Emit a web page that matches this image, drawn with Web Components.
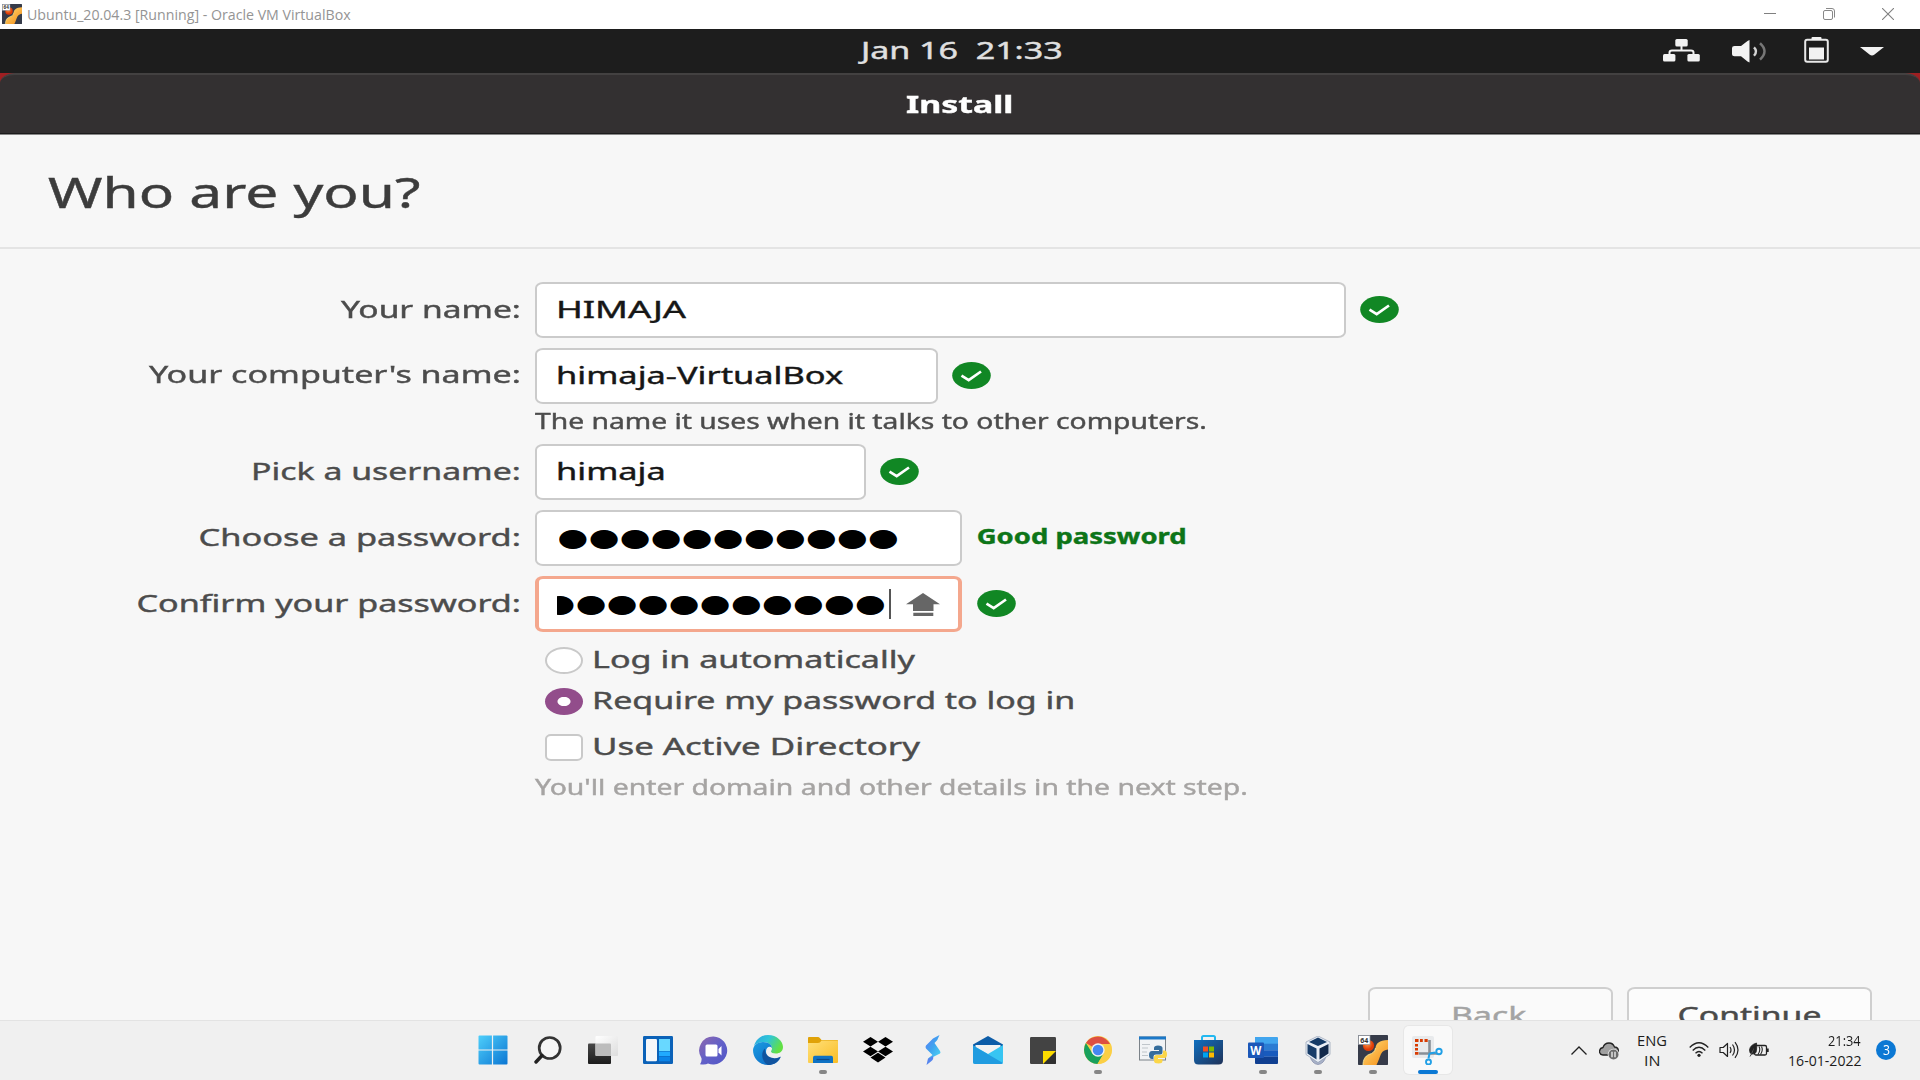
<!DOCTYPE html>
<html lang="en">
<head>
<meta charset="utf-8">
<title>Ubuntu_20.04.3 [Running] - Oracle VM VirtualBox</title>
<style>
html,body{margin:0;padding:0;width:1920px;height:1080px;overflow:hidden;background:#f7f7f7}
</style>
</head>
<body>
<vm-desktop></vm-desktop>
<script>
const define = (name, html) => customElements.define(name, class extends HTMLElement {
  connectedCallback() {
    if (this.shadowRoot) return;
    const root = this.attachShadow({ mode: 'open' });
    root.innerHTML = typeof html === 'function' ? html(this) : html;
  }
});

/* Text stretched horizontally so that its ink is exactly w pixels wide */
const ctx = document.createElement('canvas').getContext('2d');
define('fit-text', el => {
  const a = (n, d) => el.getAttribute(n) || d;
  const size = a('size', '23.5'), weight = a('weight', '400'), font = a('font', 'Noto Sans'), w = +a('w', 100), lh = a('lh', '54');
  ctx.font = `${weight} ${size}px "${font}"`;
  const m = ctx.measureText(el.textContent);
  const k = w / (m.actualBoundingBoxRight + m.actualBoundingBoxLeft);
  const off = m.actualBoundingBoxLeft * k;
  const stroke = font === 'Noto Sans' ? '-webkit-text-stroke:.4px currentColor;' : '';
  return `<style>:host{display:block;flex:none;width:${w}px;height:${lh}px;line-height:${lh}px;white-space:pre}
  span{display:inline-block;${stroke}font:${weight} ${size}px/${lh}px "${font}","Open Sans",sans-serif;transform-origin:0 50%;transform:translateX(${off}px) scaleX(${k})}</style><span><slot></slot></span>`;
});

const vm64 = `<defs><linearGradient id="o" x1="0" y1="0" x2="1" y2="1"><stop offset="0" stop-color="#ffe07a"/><stop offset="1" stop-color="#f58a12"/></linearGradient><radialGradient id="r" cx=".4" cy=".35"><stop offset="0" stop-color="#ff9a4a"/><stop offset="1" stop-color="#e03c06"/></radialGradient></defs>
<rect width="30" height="30" rx=".8" fill="#363b49"/><circle cx="10.5" cy="10.5" r="5.6" fill="url(#r)"/><path d="M30 5v9.500C27 15 24.500 16 23 19c-1.500 3.500-3 8-4.500 11H5c0-5 2-9 6-10.500 4-1.300 6-3 6.500-6.500C18 8.500 21 5.500 30 5z" fill="url(#o)"/>
<path d="M5 30c0-5 2-9 6-10.500 4-1.300 6-3 6.500-6.500" fill="none" stroke="#fff0a0" stroke-width=".8"/><rect x=".5" y=".5" width="11.500" height="9" fill="#fff" stroke="#8a8f98" stroke-width=".7"/><text x="6.200" y="7.600" text-anchor="middle" font-family="Noto Sans" font-weight="700" font-size="7" fill="#333">64</text>`;

/* name: [width, height, viewBox, markup] */
const ICONS = {
  vm: [20, 20, '0 0 30 30', vm64],
  vm64: [30, 30, '0 0 30 30', vm64],
  min: [12, 12, '0 0 12 12', '<path d="M0 5.500h12" stroke="#808080"/>'],
  restore: [12, 12, '0 0 12 12', '<g fill="none" stroke="#888"><rect x=".5" y="2.500" width="9" height="9" rx="1.500"/><path d="M3 .5h6q2.500 0 2.500 2.500v6.500"/></g>'],
  close: [12, 12, '0 0 12 12', '<path d="M0 0l12 12M12 0L0 12" stroke="#808080" stroke-width="1.100"/>'],
  net: [37, 23, '0 0 37 23', '<g fill="#f2f2f2"><rect x="12.300" y="0" width="12.400" height="7.600" rx="1.500"/><rect x="0" y="15" width="12.400" height="7.600" rx="1.500"/><rect x="24.400" y="15" width="12.400" height="7.600" rx="1.500"/></g><path d="M18.500 7v5M6.500 15.500v-2q0-2 2.500-2h19q2.500 0 2.500 2v2" fill="none" stroke="#f2f2f2" stroke-width="2"/>'],
  vol: [36, 23, '0 0 36 23', '<path d="M0 8q0-2 2.500-2h6.500L15.500 1 17.500 0v22.500l-2-1L9 16.300H2.500Q0 16.300 0 14.300z" fill="#f2f2f2"/><path d="M22 7.300q4 4 0 8.400" fill="none" stroke="#d5d5d5" stroke-width="2.400"/><path d="M28 3.200q9 8 0 16.500" fill="none" stroke="#777" stroke-width="2.500"/>'],
  bat: [25, 26, '0 0 25 26', '<rect x="1.200" y="2.800" width="22.600" height="22" rx="2" fill="none" stroke="#e8e8e8" stroke-width="2"/><rect x="7.500" y="0" width="10" height="3" rx="1" fill="#f2f2f2"/><rect x="5" y="10.500" width="15" height="12" fill="#f2f2f2"/>'],
  down: [24, 9, '0 0 24 9', '<path d="M0 0h24l-9.500 7.500q-2.500 2-5 0z" fill="#f2f2f2"/>'],
  ok: [39, 27, '0 0 39 27', '<ellipse cx="19.500" cy="13.500" rx="19.300" ry="13.400" fill="#118724"/><path d="M9.500 13.600l7.200 4.500L29 9.500" fill="none" stroke="#fff" stroke-width="2.700"/>'],
  caps: [34, 23, '0 0 34 23', '<path d="M17 0l17 11.200h-6.500V18h-20.500v-6.800H0zM7.300 19.800h20v3.200h-20z" fill="#666"/>'],
  start: [30, 30, '0 0 30 30', '<defs><linearGradient id="g" x1="0" y1="0" x2="1" y2="1" gradientUnits="objectBoundingBox"><stop offset="0" stop-color="#4fd0fb"/><stop offset="1" stop-color="#0a74d2"/></linearGradient><mask id="m"><rect x=".5" y=".5" width="29" height="29" rx="1" fill="#fff"/><path d="M14.500 0v30M0 15h30" stroke="#000" stroke-width="1.200"/></mask></defs><rect width="30" height="30" fill="url(#g)" mask="url(#m)"/>'],
  search: [28, 29, '0 0 28 29', '<circle cx="15.700" cy="12" r="10.500" fill="#f6f6f6" stroke="#333" stroke-width="2.700"/><path d="M8 19.500L2 26" stroke="#222" stroke-width="3.400" stroke-linecap="round"/>'],
  task: [30, 28, '0 0 30 28', '<defs><linearGradient id="k" x1="0" y1="0" x2="0" y2="1"><stop offset="0" stop-color="#484848"/><stop offset="1" stop-color="#1c1c1c"/></linearGradient><linearGradient id="w" x1="0" y1="0" x2="1" y2="1"><stop offset="0" stop-color="#fff"/><stop offset="1" stop-color="#ddd"/></linearGradient></defs><rect x="0" y="7.500" width="23" height="20.500" rx="1" fill="url(#k)"/><rect x="7.500" y="0" width="22.500" height="20" rx="1" fill="url(#w)"/><path d="M7.500 7.500H22q1 0 1 1V20H8.500q-1 0-1-1z" fill="#bcbcbc"/>'],
  widgets: [30, 28, '0 0 30 28', '<rect width="30" height="28" rx="1.200" fill="#0b62b8"/><rect x="3" y="3" width="11" height="22.300" rx="1.200" fill="#f5f7f9"/><path d="M16 3h11v12H16z" fill="#68d8ff"/><path d="M16 15.500h11V20H16z" fill="#20aaff"/><path d="M16 20.500h11v4.800H16z" fill="#0a84e8"/>'],
  chat: [29, 29, '0 0 29 29', '<defs><linearGradient id="c" x1="0" y1="0" x2="1" y2="1"><stop offset="0" stop-color="#9068ad"/><stop offset=".5" stop-color="#6260c8"/><stop offset="1" stop-color="#5156c6"/></linearGradient></defs><path d="M14.500.5a14 14 0 1 1-5.500 27q-2.500 1.500-8 .7 2-2.500 1.500-6A14 14 0 0 1 14.500.5z" fill="url(#c)"/><rect x="6.500" y="8.500" width="12" height="12" rx="1.500" fill="#fff"/><path d="M19.500 13l3-3v9.500l-3-3z" fill="#fff"/>'],
  edge: [30, 30, '0 0 30 30', '<defs><linearGradient id="a" x1="0" y1="0" x2="1" y2=".4"><stop offset="0" stop-color="#2aa4e0"/><stop offset=".5" stop-color="#2fc5d8"/><stop offset="1" stop-color="#62e044"/></linearGradient><linearGradient id="b" x1="0" y1="0" x2="1" y2="1"><stop offset="0" stop-color="#1b9de2"/><stop offset="1" stop-color="#0b62c0"/></linearGradient></defs><path d="M1 11C3 4 8 0 15 0c9 0 15 6.500 15 12 0 4.500-3.500 6.500-7 6.500-3 0-5-1-5-2 0-.7 1-1.200 1-3.500C19 10 15 7 10.500 7 6 7 2.500 9 1 11z" fill="url(#a)"/><path d="M0 15C.500 10 4.500 7 10 7s9 3 9 6c-2-2.500-6-1-6 3.500C13 24 21 27 27 23c-2.500 5-7 7-12 7C6.500 30 0 23.500 0 15z" fill="url(#b)"/><path d="M12 13.500c-4.500 4-3.500 13 3 16.500 5 0 9.500-2 12.500-7.500.6-.8-.2-1-.8-.6-5.500 2.800-12 .6-14-3.900-.7-1.800-.7-3.200-.7-4.500z" fill="#10549f"/>'],
  folder: [30, 28, '0 0 30 28', '<defs><linearGradient id="f" x1="0" y1="0" x2="1" y2="1"><stop offset="0" stop-color="#ffe07a"/><stop offset="1" stop-color="#f9bd25"/></linearGradient></defs><path d="M0 2Q0 1 1 1h9q1 0 2 1.300L13.500 4H29q1 0 1 1v3H0z" fill="#e0a208"/><path d="M0 7h10q2 0 3.500-2.500H29q1 0 1 1V26q0 1-1 1H1q-1 0-1-1z" fill="url(#f)"/><path d="M5 27v-5.500q0-1.700 1.700-1.700h16.600q1.700 0 1.700 1.700V27z" fill="#0f72c4"/><path d="M8.500 23.500h13" stroke="#0b4a8a" stroke-width="1.200"/>'],
  dropbox: [30, 26, '0 0 30 26', '<path d="M7.500 0L15 4.700 7.500 9.500 0 4.700zM22.500 0L30 4.700l-7.500 4.800L15 4.700zM7.500 9.700L15 14.500l-7.500 4.700L0 14.500zM22.500 9.700L30 14.500l-7.500 4.700L15 14.500zM15 15.800l7.500 4.700L15 25.500l-7.500-5z" fill="#000"/>'],
  swift: [16, 30, '0 0 16 30', '<defs><linearGradient id="s" x1="0" y1="0" x2="1" y2="1"><stop offset="0" stop-color="#5b7cf5"/><stop offset=".5" stop-color="#3fa4ef"/><stop offset="1" stop-color="#4cd8f4"/></linearGradient></defs><path d="M14.500 0L8 3.500 1 10.500q-1 1.500 0 3L7.500 20 3 23.500q4 .5 5-1.500l7-3.500q1-1 0-2.500L9.500 8q3.500-3 5-8z" fill="url(#s)"/><path d="M1.500 30L3 23.500q3-1 5-2.500 1 3-1.500 5z" fill="#5585ee"/>'],
  mail: [30, 28, '0 0 30 28', '<path d="M15 0l15 8.500V12H0V8.500z" fill="#0d5da8"/><path d="M2.500 9h25v9h-25z" fill="#f3f3f3"/><path d="M0 9.500L15 18 30 9v17q0 2-2 2H2q-2 0-2-2z" fill="#37c5f2"/><path d="M0 9.500L30 27q-1 1-2 1H2q-2 0-2-2z" fill="#209ce0"/>'],
  sticky: [26, 27, '0 0 26 27', '<rect width="26" height="27" rx="1.200" fill="#434343"/><path d="M13 27l13-13v12q0 1-1 1z" fill="#303030"/><path d="M13 14h13L13 27z" fill="#fddc00"/>'],
  chrome: [28, 28, '0 0 28 28', '<circle cx="14" cy="14" r="14" fill="#fbcf45"/><path d="M14 14L1.900 7A14 14 0 0 1 26.100 8H14z" fill="#dd4f43"/><path d="M1.900 7a14 14 0 0 0 11.600 21L20 17 14 14 8.500 17.500z" fill="#18a05d"/><path d="M26.300 8a14 14 0 0 1-12.800 20L20 17l0-9z" fill="#fbcf45"/><circle cx="14" cy="14" r="6.700" fill="#f1f1f1"/><circle cx="14" cy="14" r="5.300" fill="#4587f3"/>'],
  python: [28, 28, '0 0 28 28', '<rect x=".5" y="1" width="26" height="23" fill="#f1f3f5" stroke="#7b8288"/><path d="M0 .5h27v3H0z" fill="#1b78c8"/><path d="M3 8.500h8M3 12h6M3 16h5M3 19.500h6" stroke="#bfc5ca" stroke-width="1"/><path d="M19 9.500q-4 0-4 2.500v2h5v1h-7q-3 0-3 4t3 4h1.500v-2.500q0-2 2.500-2h4q2.500 0 2.500-2.500v-4q0-2.500-4.500-2.500z" fill="#356d9c"/><path d="M19.500 27.500q4 0 4-2.500v-2h-4.500v-1h6.500q2.500 0 2.500-3.700t-2.500-3.800h-1.500v2.500q0 2-2.500 2h-4q-2.500 0-2.500 2.500v3.500q0 2.500 4.500 2.500z" fill="#fbd648"/>'],
  store: [29, 30, '0 0 29 30', '<defs><linearGradient id="t" x1="0" y1="0" x2="1" y2="1"><stop offset="0" stop-color="#0f6fc0"/><stop offset="1" stop-color="#1f3258"/></linearGradient></defs><path d="M8 6V2.500q0-1.500 1.500-1.500h10Q21 1 21 2.500V6" fill="none" stroke="#22b8f0" stroke-width="2"/><path d="M0 5h29v20q0 4.500-4.500 4.500h-20Q0 29.500 0 25z" fill="url(#t)"/><path d="M9 11.500h5v5H9z" fill="#f25022"/><path d="M15 11.500h5v5h-5z" fill="#7fba00"/><path d="M9 17.500h5v5H9z" fill="#00a4ef"/><path d="M15 17.500h5v5h-5z" fill="#ffb900"/>'],
  word: [30, 27, '0 0 30 27', '<path d="M7 0h22q1 0 1 1v6H7z" fill="#41a5ee"/><path d="M7 6.700h23v6.800H7z" fill="#2b7cd3"/><path d="M7 13.300h23v6.500H7z" fill="#185abd"/><path d="M7 19.700h23V26q0 1-1 1H8q-1 0-1-1z" fill="#103f91"/><rect y="5.500" width="16" height="15.500" rx="1" fill="#1b57b8"/><text x="7.800" y="17.700" text-anchor="middle" font-family="Open Sans" font-weight="700" font-size="11.500" fill="#fff">W</text>'],
  vbox: [26, 29, '0 0 26 29', '<path d="M5 20q2 8 8 8.500 6-.5 8-8.500l-8 5z" fill="#a9b2c8" stroke="#7f8aa6" stroke-width=".7"/><path d="M13 0l12 6v12.500l-12 8-12-8V6z" fill="#e9eef5" stroke="#8290a8" stroke-width=".6"/><path d="M13 1.500L22 6l-9 4-9-4z" fill="#143a66"/><path d="M2.500 8l9 4.500v11L2.500 17.500z" fill="#183d69"/><path d="M23.500 8l-9 4.500v11l9-6z" fill="#11284a"/>'],
  snip: [32, 30, '0 0 32 30', '<rect x="0" y="1" width="22" height="22" rx="2" fill="#e8eaec"/><path d="M17.500 5v14M7 18.500h18" stroke="#888f96" stroke-width="2.600"/><g fill="#d83b01"><path d="M3 4h3.500v3H3zM8 4h2.800v3H8zM12.500 4h3.200v3h-3.200zM3 9h3v2.500H3zM3 13h3v2.500H3zM3 17h3.500v2.800H3z"/></g><path d="M17.500 18.500l6-1M17.500 18.500l-1 5" stroke="#22a0e6" stroke-width="2"/><circle cx="27" cy="16.500" r="2.700" fill="none" stroke="#22a0e6" stroke-width="1.900"/><circle cx="16.500" cy="27" r="2.500" fill="none" stroke="#22a0e6" stroke-width="1.900"/>'],
  chev: [16, 9, '0 0 16 9', '<path d="M.5 8.500L8 1l7.500 7.500" fill="none" stroke="#222" stroke-width="1.300"/>'],
  cloud: [20, 18, '0 0 20 18', '<path d="M4 13q-3.500-.5-3.500-3.700Q.8 6 4 5.500 5.500 1 10 1q4 0 5.500 4 4 .3 4 4.500T16 13z" fill="#a0a0a0" stroke="#222" stroke-width="1.300"/><circle cx="14.500" cy="12.500" r="5.800" fill="#f0f0f0"/><circle cx="14.500" cy="12.500" r="5" fill="#6b6b6b"/><path d="M13 9.800v5.400M16 9.800v5.400" stroke="#fff" stroke-width="1.200"/>'],
  wifi: [20, 15, '0 0 20 15', '<g fill="none" stroke="#222" stroke-width="1.300"><path d="M.7 5.500q9.300-9.500 18.600 0M3.700 8.500q6.300-6.500 12.600 0M6.500 11.300q3.500-3.500 7 0"/></g><circle cx="10" cy="13.300" r="1.600" fill="#222"/>'],
  sound: [20, 18, '0 0 20 18', '<g fill="none" stroke="#222" stroke-width="1.200"><path d="M1 6.500h3.200L8.500 2.500v13L4.200 11.500H1z" stroke-linejoin="round"/><path d="M11 6q2 3 0 6M13.500 3.500q4 5.500 0 11M16 1.200q6 7.800 0 15.600"/></g>'],
  power: [20, 16, '0 0 20 16', '<rect x="5.500" y="3.500" width="12" height="9.500" rx="1.500" fill="#f0f0f0" stroke="#222" stroke-width="1.300"/><path d="M18.800 6.500v3.500" stroke="#222" stroke-width="1.800"/><path d="M7.500 1Q1 3 .5 8q0 3 2 4l-1.500 2.500M2.500 12q4.500.5 5-3.500T7.500 1" fill="#222" stroke="#222" stroke-width=".8"/><path d="M10 4.500q2 3.500-1 8M12.500 4.500q2 3.500-1 8" fill="none" stroke="#222" stroke-width="1.100"/>']
};
define('ui-icon', el => {
  const [w, h, vb, body] = ICONS[el.getAttribute('name')];
  return `<style>:host{display:block;flex:none;width:${w}px;height:${h}px}svg{display:block}</style><svg width="${w}" height="${h}" viewBox="${vb}">${body}</svg>`;
});

define('window-title', `<style>:host{display:flex;height:29px;background:#fff;align-items:flex-start;color:#949494;box-sizing:border-box;padding:0 26px 0 2px}
.i{padding-top:4px;margin-right:6px}.c{display:flex;gap:47px;margin-left:auto;padding-top:8px}</style>
<ui-icon class="i" name="vm"></ui-icon><fit-text w="323" size="14.5" lh="29" font="Open Sans">Ubuntu_20.04.3 [Running] - Oracle VM VirtualBox</fit-text>
<div class="c"><ui-icon name="min"></ui-icon><ui-icon name="restore"></ui-icon><ui-icon name="close"></ui-icon></div>`);

define('guest-topbar', `<style>:host{display:flex;height:44px;background:#1d1d1d;color:#e0e0e0;box-sizing:border-box;padding:0 36px 0 858px}
.t{display:flex;margin-left:auto}</style>
<fit-text w="204" size="23.5" lh="43">Jan 16  21:33</fit-text>
<div class="t"><ui-icon style="margin:10px 32px 0 0" name="net"></ui-icon><ui-icon style="margin:11px 36px 0 0" name="vol"></ui-icon><ui-icon style="margin:8px 31px 0 0" name="bat"></ui-icon><ui-icon style="margin-top:18px" name="down"></ui-icon></div>`);

define('guest-titlebar', `<style>:host{display:block;background:#a01f22}
div{display:flex;justify-content:center;box-sizing:border-box;height:61px;background:#333031;border-top:2px solid #434141;border-bottom:1px solid #1c1c1c;border-radius:15px 15px 0 0/10px 10px 0 0;color:#fff;padding-right:3px}</style>
<div><slot></slot></div>`);

define('page-heading', `<style>:host{display:block;box-sizing:border-box;height:115px;padding:26px 0 0 48px;border-top:1px solid #888;border-bottom:2px solid #e4e4e4;color:#3c3c3c}</style>
<fit-text w="371" size="41.5" lh="62">Who are you?</fit-text>`);

define('form-row', `<style>:host{display:flex;height:56px;color:#4c4c4c}
.l{width:519px;margin-right:16px;display:flex;justify-content:flex-end;flex:none}.r{display:flex}</style>
<div class="l"><slot name="label"></slot></div><div class="r"><slot></slot></div>`);

define('text-field', el => `<style>:host{display:flex;box-sizing:border-box;height:56px;flex:none;width:${el.getAttribute('w')}px;border:2px solid #cbcbcb;border-radius:8px/6px;background:#fff;color:#161616;padding:0 0 0 21.5px}
:host([focused]){border:3px solid #f4a78d;border-left-width:4px;border-right-width:4px;padding-left:18px}</style><slot></slot>`);

define('form-option', el => {
  const kind = el.getAttribute('kind');
  const box = kind === 'on' ? 'border-radius:50%;background:radial-gradient(ellipse 7px 5px,#fff 85%,#924d8b 100%)'
    : `border:2px solid #c9c9c9;background:#fff;border-radius:${kind === 'check' ? '6px/5px' : '50%'}`;
  return `<style>:host{display:flex;height:27px;padding-left:545px;color:#4c4c4c}i{box-sizing:border-box;width:38px;height:27px;margin-right:12px;${box}}</style><i></i><slot></slot>`;
});

define('password-dots', el => {
  const skip = +el.getAttribute('skip') || 0;
  return `<style>:host{display:block;overflow:hidden;flex:none;width:${342 - skip}px;height:50px}fit-text{margin-left:-${skip}px}</style>
  <fit-text w="339" size="25" lh="${el.getAttribute('lh')}" font="DejaVu Sans" style="color:#000">●●●●●●●●●●●</fit-text>`;
});

define('push-button', `<style>:host{display:flex;justify-content:center;box-sizing:border-box;width:245px;height:56px;border:2px solid #cfcfcf;border-radius:8px/6px;background:#fcfcfc;color:#4a4a4a}:host([disabled]){background:#fafafa;color:#a4a4a4}</style><slot></slot>`);

define('task-app', el => {
  const s = el.getAttribute('state');
  return `<style>:host{display:flex;width:55px;height:60px;flex:none;align-items:center;justify-content:center;position:relative}
  .b{display:flex;align-items:center;justify-content:center;width:48px;height:48px;border-radius:5px;${s === 'active' ? 'background:#f9f9f9;box-shadow:0 0 0 1px #e7e7e7' : ''}}
  i{position:absolute;bottom:6px;left:50%;transform:translateX(-50%);height:4px;border-radius:2px;${s === 'active' ? 'width:20px;background:#0b78d4' : s ? 'width:8px;background:#868686' : ''}}</style>
  <div class="b"><ui-icon name="${el.getAttribute('icon')}"></ui-icon></div><i></i>`;
});

define('system-tray', `<style>:host{display:flex;align-items:flex-start;margin-left:auto;padding-right:24px;color:#1c1c1c}
.col{display:flex;flex-direction:column}.n{width:20px;height:20px;border-radius:50%;background:#0b78d4;color:#fff;display:flex;justify-content:center;margin:20px 0 0 15px}</style>
<ui-icon name="chev" style="margin:26px 12px 0 0"></ui-icon><ui-icon name="cloud" style="margin:22px 19px 0 0"></ui-icon>
<div class="col" style="align-items:center;margin:10px 23px 0 0"><fit-text w="28" size="15" lh="20" font="Open Sans">ENG</fit-text><fit-text w="14" size="15" lh="20" font="Open Sans">IN</fit-text></div>
<ui-icon name="wifi" style="margin:22px 10px 0 0"></ui-icon><ui-icon name="sound" style="margin:21px 10px 0 0"></ui-icon><ui-icon name="power" style="margin:22px 20px 0 0"></ui-icon>
<div class="col" style="align-items:flex-end;margin-top:10px"><fit-text w="33" size="15" lh="20" font="Open Sans">21:34</fit-text><fit-text w="72" size="15" lh="20" font="Open Sans">16-01-2022</fit-text></div>
<div class="n"><fit-text w="7" size="14" lh="20" font="Open Sans">3</fit-text></div>`);

define('task-bar', `<style>:host{display:flex;flex:none;height:60px;background:#f0f0f0;box-shadow:inset 0 1px #e3e3e3;padding-left:465.5px}</style>
${[['start'], ['search'], ['task'], ['widgets'], ['chat'], ['edge'], ['folder', 'open'], ['dropbox'], ['swift'], ['mail'], ['sticky'], ['chrome', 'open'], ['python'], ['store'], ['word', 'open'], ['vbox', 'open'], ['vm64', 'open'], ['snip', 'active']].map(([n, s]) => `<task-app icon="${n}" state="${s || ''}"></task-app>`).join('')}
<system-tray></system-tray>`);

define('user-form', `<style>:host{display:flex;flex-direction:column;padding-top:33px;color:#4c4c4c}
form-row{margin-bottom:10px}.ok{margin:14px 0 0 14px}.hint{margin-left:535px}</style>
<form-row><fit-text slot="label" w="178">Your name:</fit-text><text-field w="811"><fit-text w="127" lh="50">HIMAJA</fit-text></text-field><ui-icon class="ok" name="ok"></ui-icon></form-row>
<form-row style="margin-bottom:0"><fit-text slot="label" w="370" lh="52">Your computer's name:</fit-text><text-field w="403"><fit-text w="285" lh="51">himaja-VirtualBox</fit-text></text-field><ui-icon class="ok" name="ok"></ui-icon></form-row>
<fit-text class="hint" w="671" size="21" lh="40" style="margin-top:-3px;margin-bottom:3px">The name it uses when it talks to other computers.</fit-text>
<form-row><fit-text slot="label" w="265">Pick a username:</fit-text><text-field w="331"><fit-text w="105" lh="50">himaja</fit-text></text-field><ui-icon class="ok" name="ok"></ui-icon></form-row>
<form-row><fit-text slot="label" w="319">Choose a password:</fit-text><text-field w="427"><password-dots lh="51"></password-dots></text-field><fit-text style="margin-left:16px;color:#0d7518" w="207" size="21" weight="700" lh="53">Good password</fit-text></form-row>
<form-row style="margin-bottom:15px"><fit-text slot="label" w="381">Confirm your password:</fit-text><text-field w="427" focused><password-dots skip="11" lh="49"></password-dots>
<b style="width:2px;height:30px;margin:10px 0 0 1px;background:#555;flex:none"></b><ui-icon name="caps" style="margin:14px 0 0 15px"></ui-icon></text-field><ui-icon class="ok" name="ok" style="margin-left:15px"></ui-icon></form-row>
<form-option><fit-text w="320" lh="24">Log in automatically</fit-text></form-option>
<form-option kind="on" style="margin-top:14px"><fit-text w="478" lh="24">Require my password to log in</fit-text></form-option>
<form-option kind="check" style="margin-top:19px"><fit-text w="325" lh="25">Use Active Directory</fit-text></form-option>
<fit-text class="hint" w="712" size="21" lh="31" style="margin-top:11px;color:#a6a4a3">You'll enter domain and other details in the next step.</fit-text>`);

define('vm-desktop', `<style>:host{display:flex;flex-direction:column;width:1920px;height:1080px;overflow:hidden;background:#f7f7f7}
main{height:947px;overflow:hidden;display:flex;flex-direction:column}
.btns{display:flex;gap:14px;justify-content:flex-end;padding-right:48px;margin-top:auto;margin-bottom:-23px}</style>
<window-title></window-title><guest-topbar></guest-topbar>
<main><guest-titlebar><fit-text w="106" lh="58" weight="700">Install</fit-text></guest-titlebar>
<page-heading></page-heading><user-form></user-form>
<div class="btns"><push-button disabled><fit-text w="73" lh="52">Back</fit-text></push-button><push-button><fit-text w="142" lh="52">Continue</fit-text></push-button></div></main>
<task-bar></task-bar>`);
</script>
</body>
</html>
